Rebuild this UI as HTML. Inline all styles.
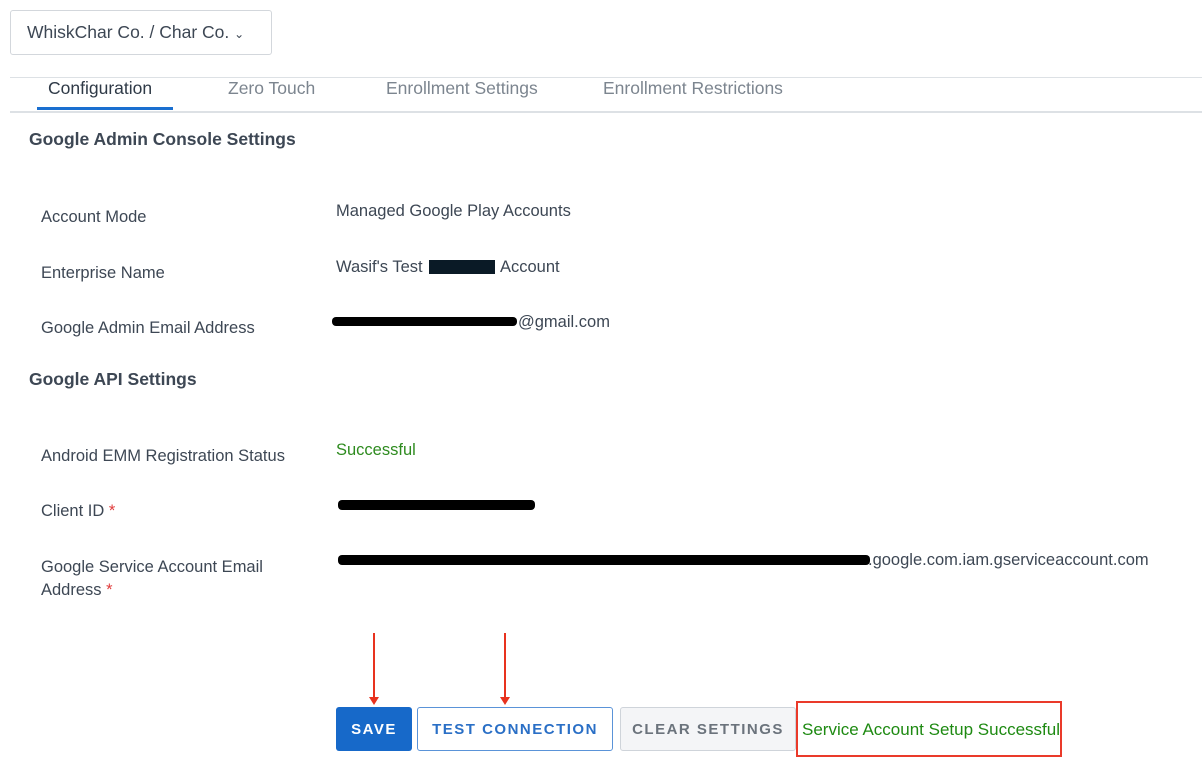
<!DOCTYPE html>
<html><head><style>
body{margin:0;width:1202px;height:771px;background:#fff;font-family:"Liberation Sans",sans-serif;color:#3d4754;position:relative;overflow:hidden}
.a{position:absolute;white-space:nowrap}
.l{font-size:16.5px;color:#3d4754}
.v{font-size:16.5px;color:#3d4754}
.h{font-size:17.5px;font-weight:bold;color:#3d4754}
.bar{position:absolute;background:#000}
.btn{position:absolute;top:707px;height:44px;box-sizing:border-box;border-radius:3px;font-size:15px;font-weight:bold;letter-spacing:1.5px;display:flex;align-items:center;justify-content:center}
</style></head><body>
<div class="a" style="left:10px;top:10px;width:262px;height:45px;border:1px solid #d3d7dc;border-radius:3px;box-sizing:border-box;font-size:17.5px;line-height:43px;padding-left:16px;color:#3d4754">WhiskChar Co. / Char Co. <span style="font-size:12px">&#8964;</span></div>
<div class="a" style="left:10px;top:77px;width:1192px;height:1px;background:#dde1e5"></div>
<div class="a" style="left:10px;top:111px;width:1192px;height:2px;background:#dde1e5"></div>
<div class="a" style="left:37px;top:107px;width:136px;height:3px;background:#1a6fd0"></div>
<div class="a" style="left:48px;top:78px;font-size:17.5px;color:#2f3a47">Configuration</div>
<div class="a" style="left:228px;top:78px;font-size:17.5px;color:#7c858f">Zero Touch</div>
<div class="a" style="left:386px;top:78px;font-size:17.5px;color:#7c858f">Enrollment Settings</div>
<div class="a" style="left:603px;top:78px;font-size:17.5px;color:#7c858f">Enrollment Restrictions</div>
<div class="a h" style="left:29px;top:129px">Google Admin Console Settings</div>
<div class="a l" style="left:41px;top:208px">Account Mode</div>
<div class="a v" style="left:336px;top:202px">Managed Google Play Accounts</div>
<div class="a l" style="left:41px;top:264px">Enterprise Name</div>
<div class="a v" style="left:336px;top:258px">Wasif's Test</div>
<div class="bar" style="left:429px;top:260px;width:66px;height:14px;background:#0a1a26"></div>
<div class="a v" style="left:500px;top:258px">Account</div>
<div class="a l" style="left:41px;top:319px">Google Admin Email Address</div>
<div class="bar" style="left:332px;top:317px;width:185px;height:9px;border-radius:4px"></div>
<div class="a v" style="left:518px;top:313px">@gmail.com</div>
<div class="a h" style="left:29px;top:369px">Google API Settings</div>
<div class="a l" style="left:41px;top:447px">Android EMM Registration Status</div>
<div class="a v" style="left:336px;top:441px;color:#2e8b1f">Successful</div>
<div class="a l" style="left:41px;top:502px">Client ID <span style="color:#e03b3b">*</span></div>
<div class="bar" style="left:338px;top:500px;width:197px;height:10px;border-radius:4px"></div>
<div class="a l" style="left:41px;top:558px">Google Service Account Email</div>
<div class="a l" style="left:41px;top:581px">Address <span style="color:#e03b3b">*</span></div>
<div class="bar" style="left:338px;top:555px;width:532px;height:10px;border-radius:4px"></div>
<div class="a v" style="left:868px;top:551px">.google.com.iam.gserviceaccount.com</div>
<svg class="a" style="left:366px;top:633px" width="150" height="74"><g stroke="#e8321e" stroke-width="2" fill="#e8321e"><line x1="8" y1="0" x2="8" y2="66"/><line x1="139" y1="0" x2="139" y2="66"/></g><path d="M3,64 L13,64 L8,72Z M134,64 L144,64 L139,72Z" fill="#e8321e"/></svg>
<div class="btn" style="left:336px;width:76px;background:#1769c9;color:#fff">SAVE</div>
<div class="btn" style="left:417px;width:196px;border:1.5px solid #5a93d8;color:#2a6fc6">TEST CONNECTION</div>
<div class="btn" style="left:620px;width:176px;border:1.5px solid #cfd4da;background:#f4f5f7;color:#6b737c">CLEAR SETTINGS</div>
<div class="a" style="left:796px;top:701px;width:266px;height:56px;border:2px solid #ea3a2a;box-sizing:border-box;font-size:17px;color:#1e8a12;line-height:54px;padding-left:4px">Service Account Setup Successful</div>
</body></html>
